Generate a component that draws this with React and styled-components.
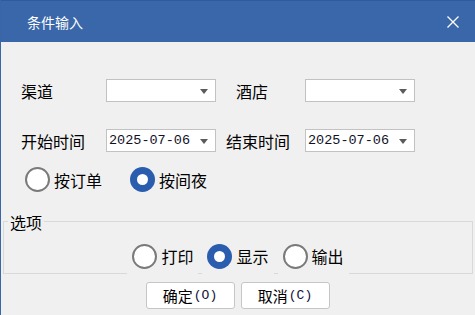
import React from "react";
import styled, { createGlobalStyle } from "styled-components";

const GlobalStyle = createGlobalStyle`
  html, body {
    margin: 0;
    padding: 0;
    background: #f0f0f0;
  }
  body {
    font-family: "Noto Sans CJK SC", "Noto Sans", sans-serif;
  }
`;

const Dialog = styled.div`
  width: 475px;
  height: 315px;
  box-sizing: border-box;
  border-left: 1px solid #3866a8;
  background: #f0f0f0;
  display: flex;
  flex-direction: column;
  overflow: hidden;
`;

const TitleBar = styled.div`
  height: 42px;
  box-sizing: border-box;
  border-top: 1px solid #2f5b9b;
  background: #3a67a9;
  color: #fff;
  display: flex;
  align-items: center;
  justify-content: space-between;
  padding: 0 16px 0 26px;
  font-size: 14px;
  flex-shrink: 0;
`;

const CloseButton = styled.div`
  width: 12px;
  height: 12px;
  display: flex;
`;

const Form = styled.div`
  display: flex;
  flex-direction: column;
  padding-left: 20px;
`;

const Row = styled.div`
  display: flex;
  align-items: center;
  height: 23px;
  margin-top: ${(p) => p.$top}px;
`;

const Label = styled.div`
  width: ${(p) => p.$width}px;
  padding-left: ${(p) => p.$indent || 0}px;
  box-sizing: border-box;
  font-size: 16px;
  line-height: 20px;
  color: #000;
  white-space: nowrap;
`;

const Combo = styled.div`
  width: 110px;
  height: 23px;
  box-sizing: border-box;
  border: 1px solid #c2c2c2;
  background: #fff;
  display: flex;
  align-items: center;
  justify-content: space-between;
  padding: 0 7px 0 2px;
  font-family: "Liberation Mono", monospace;
  font-size: 13.5px;
  color: #101028;
`;

const Arrow = styled.span`
  width: 0;
  height: 0;
  border-left: 4.5px solid transparent;
  border-right: 4.5px solid transparent;
  border-top: 5px solid #5a5c5a;
  margin-top: 1px;
`;

const RadioRow = styled.div`
  display: flex;
  align-items: center;
  gap: 28px;
  height: 25px;
  margin-top: 15px;
  padding-left: 4px;
`;

const RadioItem = styled.div`
  display: flex;
  align-items: center;
  gap: 4px;
  font-size: 16px;
  line-height: 20px;
  color: #000;
`;

const Circle = styled.span`
  width: 25px;
  height: 25px;
  box-sizing: border-box;
  border-radius: 50%;
  flex-shrink: 0;
  display: flex;
  align-items: center;
  justify-content: center;
  border: ${(p) => (p.$checked ? "none" : "2px solid #7a7a7a")};
  background: ${(p) => (p.$checked ? "#2b5daf" : "#fff")};
  &::after {
    content: "";
    display: ${(p) => (p.$checked ? "block" : "none")};
    width: 11px;
    height: 11px;
    border-radius: 50%;
    background: #fff;
  }
`;

const Group = styled.div`
  position: relative;
  margin: 29px 2px 0 2px;
  height: 53px;
  box-sizing: border-box;
  border: 1px solid #d9d9d9;
  padding-top: 16px;
  display: flex;
  justify-content: center;
  align-items: flex-start;
  gap: 4px;
`;

const Caption = styled.div`
  position: absolute;
  top: -8px;
  left: 4px;
  padding: 0 2px;
  background: #f0f0f0;
  font-size: 16px;
  line-height: 16px;
  color: #000;
`;

const OptionItem = styled(RadioItem)`
  height: 36px;
  padding: 0 5px;
  background: #f0f0f0;
  box-sizing: border-box;
`;

const ButtonRow = styled.div`
  display: flex;
  justify-content: center;
  gap: 6px;
  margin-top: 8px;
  padding-right: 1px;
`;

const Button = styled.div`
  width: 89px;
  height: 27px;
  box-sizing: border-box;
  border: 1px solid #c6c6c6;
  border-radius: 3px;
  background: #fff;
  display: flex;
  align-items: center;
  justify-content: center;
  font-size: 15px;
  color: #000;
`;

const Key = styled.span`
  font-family: "Liberation Mono", monospace;
  font-size: 13px;
  color: #10103a;
  margin-left: 1px;
`;

function Radio({ checked, children }) {
  return (
    <RadioItem>
      <Circle $checked={checked} />
      {children}
    </RadioItem>
  );
}

function Option({ checked, children }) {
  return (
    <OptionItem>
      <Circle $checked={checked} />
      {children}
    </OptionItem>
  );
}

export default function App() {
  return (
    <>
      <GlobalStyle />
      <Dialog>
        <TitleBar>
          <span>条件输入</span>
          <CloseButton>
            <svg width="12" height="12" viewBox="0 0 12 12">
              <path d="M0.5 0.5 L11.5 11.5 M11.5 0.5 L0.5 11.5" stroke="#fff" strokeWidth="1.3" fill="none" />
            </svg>
          </CloseButton>
        </TitleBar>

        <Form>
          <Row $top={37}>
            <Label $width={85}>渠道</Label>
            <Combo>
              <span />
              <Arrow />
            </Combo>
            <Label $width={89} $indent={20}>酒店</Label>
            <Combo>
              <span />
              <Arrow />
            </Combo>
          </Row>
          <Row $top={27}>
            <Label $width={85}>开始时间</Label>
            <Combo>
              <span>2025-07-06</span>
              <Arrow />
            </Combo>
            <Label $width={89} $indent={10}>结束时间</Label>
            <Combo>
              <span>2025-07-06</span>
              <Arrow />
            </Combo>
          </Row>
          <RadioRow>
            <Radio>按订单</Radio>
            <Radio checked>按间夜</Radio>
          </RadioRow>
        </Form>

        <Group>
          <Caption>选项</Caption>
          <Option>打印</Option>
          <Option checked>显示</Option>
          <Option>输出</Option>
        </Group>

        <ButtonRow>
          <Button>
            确定<Key>(O)</Key>
          </Button>
          <Button>
            取消<Key>(C)</Key>
          </Button>
        </ButtonRow>
      </Dialog>
    </>
  );
}
